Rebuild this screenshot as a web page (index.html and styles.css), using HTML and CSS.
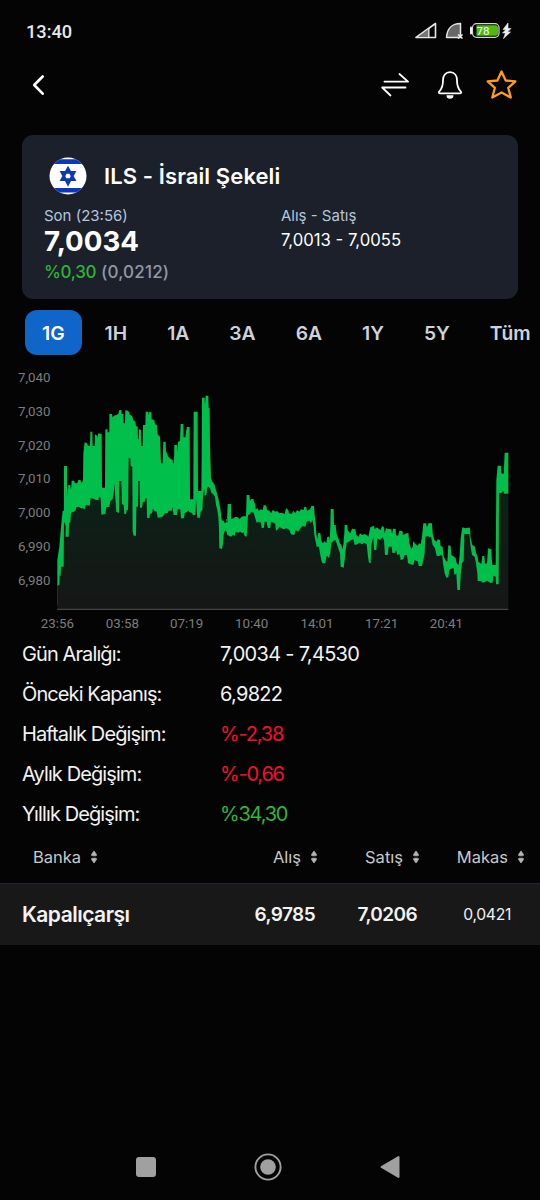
FILE: index.html
```
<!DOCTYPE html>
<html lang="tr">
<head>
  <meta charset="UTF-8">
  <meta name="viewport" content="width=device-width, initial-scale=1.0">
  <title>ILS - İsrail Şekeli</title>
  <link rel="stylesheet" href="styles.css">
</head>
<body>
  <div class="app">
    <div class="status-bar">
      <span class="clock">13:40</span>
      <svg class="status-icons" width="98" height="24" viewBox="0 0 98 24">
        <path d="M2 18.500L21.500 4.500V18.500z" fill="none" stroke="#e6e6e6" stroke-width="1.600" stroke-linejoin="round"/>
        <path d="M4 18L14.500 10V18z" fill="#777"/>
        <path d="M14.800 9V18.500" stroke="#e6e6e6" stroke-width="1.400"/>
        <path d="M32.500 18.500C33 10 38 4.500 46.500 4.500V18.500z" fill="#686868" stroke="#e6e6e6" stroke-width="1.500" stroke-linejoin="round"/>
        <path d="M44 15.500l4.500 4M48.500 15.500l-4.500 4" stroke="#eee" stroke-width="1.600"/>
        <rect x="58.500" y="4.700" width="26.500" height="13.600" rx="4" fill="#050505" stroke="#d5d5d5" stroke-width="1.200"/>
        <path d="M62.500 6.200H81.500a2.500 2.500 0 0 1 2.500 2.500v5.600a2.500 2.500 0 0 1-2.500 2.500H62.500z" fill="#4cbb12"/>
        <path d="M57 8.500v6" stroke="#eee" stroke-width="2" stroke-linecap="round"/>
        <text class="battery-text" x="69" y="15.700" text-anchor="middle">78</text>
        <path d="M94 4l-5 6.500h3l-3.500 3.500h3L89.500 19.500l7-6.500h-3l3.500-3.500h-3z" fill="#eee" stroke="#eee" stroke-width=".6"/>
      </svg>
    </div>

    <header class="app-header">
      <svg width="24" height="28" viewBox="0 0 24 28">
        <path d="M15.700 5.500L7.200 14L15.700 22.700" fill="none" stroke="#fff" stroke-width="2.600" stroke-linecap="round" stroke-linejoin="round"/>
      </svg>
      <div class="header-actions">
        <svg class="swap" width="30" height="28" viewBox="0 0 30 28" fill="none" stroke="#fff" stroke-width="1.800" stroke-linecap="round" stroke-linejoin="round">
          <path d="M3.500 10.700H27L18.500 3M24.500 16.500H1.200L9.500 24.500"/>
        </svg>
        <svg class="bell" width="28" height="30" viewBox="0 0 28 30">
          <path d="M13 2.200C8.400 2.200 6 5.700 6 10.200C6 17 4.600 19 2.300 21.300C1.300 22.600 1.700 23.300 2.900 23.300H23.100C24.300 23.300 24.700 22.600 23.700 21.300C21.400 19 20 17 20 10.200C20 5.700 17.600 2.200 13 2.200z" fill="none" stroke="#fff" stroke-width="1.800" stroke-linejoin="round"/>
          <path d="M9.500 25.300h7a3.500 3.500 0 0 1-7 0z" fill="#fff"/>
        </svg>
        <svg class="star" width="32" height="32" viewBox="0 0 32 32">
          <path d="M15.500 2.500L19.700 11.500L29.400 12.300L22.200 18.800L24.800 28.500L15.500 23.500L6.300 28.500L8.900 18.800L1.700 12.300L11.400 11.500z" fill="none" stroke="#ff9c1b" stroke-width="2.300" stroke-linejoin="round"/>
        </svg>
      </div>
    </header>

    <section class="card">
      <div class="card-title">
        <svg width="38" height="38" viewBox="0 0 38 38">
          <clipPath id="flagClip"><circle cx="19" cy="19" r="18.500"/></clipPath>
          <g clip-path="url(#flagClip)">
            <path d="M0 0H38V38H0z" fill="#fff"/>
            <path d="M0 2.200H38V7H0zM0 31H38V35.500H0z" fill="#0b38b8"/>
          </g>
          <path d="M19 11.500L25.200 22.600H12.800zM19 27L12.800 15.400H25.200z" fill="none" stroke="#0b38b8" stroke-width="2.600"/>
        </svg>
        <h1>ILS - İsrail Şekeli</h1>
      </div>
      <div class="card-body">
        <div class="last">
          <p class="label">Son (23:56)</p>
          <p class="price">7,0034</p>
          <p class="change"><span class="up">%0,30</span> (0,0212)</p>
        </div>
        <div class="bid-ask">
          <p class="label">Alış - Satış</p>
          <p class="value">7,0013 - 7,0055</p>
        </div>
      </div>
    </section>

    <nav class="tabs">
      <a class="active">1G</a>
      <a>1H</a>
      <a>1A</a>
      <a>3A</a>
      <a>6A</a>
      <a>1Y</a>
      <a>5Y</a>
      <a>Tüm</a>
    </nav>

    <svg class="chart" viewBox="0 0 1620 807">
      <defs>
        <linearGradient id="areaFill" gradientUnits="userSpaceOnUse" x1="0" y1="200" x2="0" y2="733">
          <stop offset="0" stop-color="#06301a"/>
          <stop offset=".4" stop-color="#0c2016"/>
          <stop offset="1" stop-color="#161616"/>
        </linearGradient>
      </defs>
      <!-- price range, highs down to the axis -->
      <path fill="#00bf4b" d="M172 640V585L178 545L183 487L188 437H192V303H201V358L203 395L205 360H211L213 375L215 347H222L225 355H232L235 345H241L245 355L249 345L250 265L254 232L261 235L264 242H270L271 200H277L278 243H284L285 208L291 212L292 218L295 205L305 207L306 368H315L316 193H322L323 202H328V147H336L337 157L343 152L355 147L358 135H364L365 147H370L371 175H375L376 135L383 137L387 140L390 150L396 152L400 165L406 170L408 183L413 185L414 223H416L417 193L423 195L424 243H428L429 180H436L437 140H445L446 150L448 140L454 142L455 163L463 165L465 177L471 180L473 208L480 215L483 295H488L490 230H497L498 258L505 275L512 282L518 285L519 295H522L523 240H531L532 262L534 230L540 228L542 177H550L551 217H556L558 200L561 185L569 187L570 403H580L581 140H593L594 378H604L605 270L606 98H614L615 120L617 92H625L626 128L629 130L630 240L633 340L637 350L643 358L648 375L655 400L661 430L665 465L672 468L674 475L681 470L683 418H690V463H673H677L682 473L684 417H693V463L700 460L707 455L714 457L718 463L725 455L734 453L738 455L740 390H748L750 407L754 402H760L763 413L766 417L767 433L773 430L776 437L783 433L788 435L791 420L799 422L801 435L808 437L813 445L818 435L826 440L832 438L838 445L846 443L854 448L858 430L865 435L867 445L875 447L880 437L886 445L891 435L898 440L903 433L911 435L913 425L919 427L921 437L927 435L932 430L934 422L942 423L944 450L947 475L949 505L952 523L955 503L961 505L964 527L968 535L974 529L979 535L982 515H987L989 525L991 485L992 432H1001L1002 480H1007L1010 507L1016 523L1019 533L1024 540L1027 553L1030 540L1033 505L1034 480H1041L1044 497L1051 505L1056 491L1066 493L1069 510L1076 515L1080 505L1087 510L1093 507L1100 510L1105 515L1111 487L1121 482L1124 492L1131 487L1137 493L1142 495L1146 483L1152 487L1154 505L1158 490L1165 492L1174 493L1176 507L1179 491L1187 492L1188 510L1194 513L1198 497L1207 498L1209 510L1215 507L1225 503L1228 535L1234 553L1238 545L1240 528L1246 537L1253 543L1257 535L1262 537L1266 515L1270 475H1278L1281 487L1286 474L1296 475L1298 505L1303 525L1310 530L1313 523L1320 525L1322 543L1328 547L1330 570L1336 585L1342 590L1345 541L1352 543L1354 570L1362 575L1367 580L1370 595L1376 600L1379 570L1382 520L1387 487L1396 490L1402 488H1410L1412 520L1417 540L1425 545L1428 563L1433 575L1435 590L1444 597L1447 573H1453L1455 597L1461 595L1464 550L1474 553L1475 575L1477 600H1487L1489 345L1493 302H1503L1504 325L1511 327L1514 263H1525V386H1510V720H172z"/>
      <!-- area below the lows -->
      <path fill="url(#areaFill)" d="M172 733V662L178 660L179 632H182L183 605H191L192 470L197 480V515H206L207 475L211 472L213 443L226 438L229 427L236 425L243 430H248L254 433L257 420L269 422L272 400L283 402L287 405H295L297 395L302 398L304 449L316 447L319 427L328 425L331 408L338 402L341 385L344 355L346 400L349 440L357 444L358 348H364L366 417L371 420L373 447H378L380 436L384 435L386 278L391 280L392 303L397 305L398 500L401 512H408L409 425H414L415 348H419L420 428H426L428 412L434 410L436 400H440L441 458L448 460L450 447L456 445L459 430L463 438L470 440L473 458L485 457L490 452L494 445L503 444L506 437H515L517 425L521 450H531L533 433H541L543 460H552L554 445L566 437L568 442L575 443L579 450H586L588 400L590 430L592 458H600L602 440L607 435L609 395L612 370L614 392L620 388L621 370L625 365L630 370L634 383L640 388L645 395L648 420L652 435L655 455L657 490L658 550L666 552L669 535L671 510L675 495L680 500L682 510L688 513L693 515L698 510L704 512L707 500L715 503L720 500L727 505L730 500L734 513L740 515L742 485L744 450L750 448L753 440L761 443L766 460L770 473L777 470L783 473L785 490L792 488L794 470H800L803 488L811 490L813 470L820 473L826 477L828 497L834 493L838 485L844 490L852 493L860 490L868 495L873 508L883 510L887 495L895 500L901 490L908 483L916 485L920 470L928 467L933 475L937 465L941 485L943 510L947 530L950 545H957L960 565L964 585L967 595H976L979 575L983 573L986 580L991 565L994 535L1000 527L1006 525L1010 535L1015 550L1020 565L1022 605L1031 608L1034 585L1037 555L1040 533L1047 530L1053 525L1060 523L1064 540L1072 538L1078 533L1086 538L1092 533L1100 537L1104 575L1107 593L1112 595L1114 540L1120 515L1122 555H1129L1132 520L1140 525L1148 517L1152 525L1155 570H1163L1166 545H1175L1177 563L1184 565L1188 555L1192 570L1199 567L1202 585L1210 583L1214 570H1221L1224 595L1232 598L1240 600L1244 585L1254 590L1256 603H1266L1269 590L1274 565L1276 515L1284 513L1288 517L1293 515L1298 540L1305 550L1310 573H1318L1322 570L1327 573L1329 595L1334 625L1339 638L1345 637L1348 615L1356 610H1361L1363 630L1369 625L1372 675H1380L1382 630L1386 595L1391 588L1393 507H1408L1412 545L1416 570L1424 575L1428 595L1432 625L1433 648H1443L1448 653L1455 651L1462 647L1470 653H1478L1480 632L1487 635L1488 658H1496L1497 383L1503 385L1510 377L1513 390L1521 391L1525 383V733z"/>
      <path d="M171 733H1525" stroke="#444" stroke-width="4"/>
      <g class="axis y-axis">
        <text x="54" y="51">7,040</text>
        <text x="54" y="152">7,030</text>
        <text x="54" y="254">7,020</text>
        <text x="54" y="355">7,010</text>
        <text x="54" y="457">7,000</text>
        <text x="54" y="558">6,990</text>
        <text x="54" y="660">6,980</text>
      </g>
      <g class="axis x-axis">
        <text x="172" y="790">23:56</text>
        <text x="367" y="790">03:58</text>
        <text x="560" y="790">07:19</text>
        <text x="755" y="790">10:40</text>
        <text x="951" y="790">14:01</text>
        <text x="1145" y="790">17:21</text>
        <text x="1339" y="790">20:41</text>
      </g>
    </svg>

    <dl class="details">
      <dt>Gün Aralığı:</dt><dd>7,0034 - 7,4530</dd>
      <dt>Önceki Kapanış:</dt><dd>6,9822</dd>
      <dt>Haftalık Değişim:</dt><dd class="down">%-2,38</dd>
      <dt>Aylık Değişim:</dt><dd class="down">%-0,66</dd>
      <dt>Yıllık Değişim:</dt><dd class="up">%34,30</dd>
    </dl>

    <svg width="0" height="0" class="sprite">
      <symbol id="sort" viewBox="0 0 8 14">
        <path d="M4 .9L6.500 4.500Q6.800 5.800 5.500 5.800H2.500Q1.200 5.800 1.500 4.500zM4 13.100L6.500 9.500Q6.800 8.200 5.500 8.200H2.500Q1.200 8.200 1.500 9.500z" fill="#b5b5b5" stroke="#b5b5b5" stroke-width=".7" stroke-linejoin="round"/>
      </symbol>
    </svg>
    <div class="bank-row bank-head">
      <span class="bank">Banka <svg width="8" height="14"><use href="#sort"/></svg></span>
      <span>Alış <svg width="8" height="14"><use href="#sort"/></svg></span>
      <span>Satış <svg width="8" height="14"><use href="#sort"/></svg></span>
      <span>Makas <svg width="8" height="14"><use href="#sort"/></svg></span>
    </div>
    <div class="bank-row bank-item">
      <span class="bank">Kapalıçarşı</span>
      <span class="num">6,9785</span>
      <span class="num">7,0206</span>
      <span class="spread">0,0421</span>
    </div>

    <footer class="system-nav">
      <svg width="28" height="28" viewBox="0 0 28 28"><rect x="4" y="4" width="20" height="20" rx="3" fill="#a0a0a0"/></svg>
      <svg width="28" height="28" viewBox="0 0 28 28"><circle cx="14" cy="14" r="12.600" fill="none" stroke="#a0a0a0" stroke-width="1.900"/><circle cx="14" cy="14" r="7.800" fill="#a0a0a0"/></svg>
      <svg width="28" height="28" viewBox="0 0 28 28"><path d="M5.500 14L22.500 4V24z" fill="#a0a0a0" stroke="#a0a0a0" stroke-width="2" stroke-linejoin="round"/></svg>
    </footer>
  </div>
</body>
</html>
```
FILE: styles.css
```
* {
  margin: 0;
  padding: 0;
  box-sizing: border-box;
}

body {
  font-family: Inter, sans-serif;
  background-color: #040404;
  color: #f2f2f2;
}

.app {
  display: flex;
  flex-direction: column;
  width: 540px;
  height: 1200px;
  overflow: hidden;
}

svg {
  display: block;
  flex: none;
}

.sprite {
  display: none;
}

.status-bar {
  display: flex;
  align-items: center;
  justify-content: space-between;
  height: 60px;
  padding: 2px 28px 0 26px;
}

.clock {
  font: 500 18.2px Roboto, sans-serif;
  color: #e8e8e8;
}

.battery-text {
  font: 400 11.5px Roboto, sans-serif;
  fill: #fff;
}

.app-header {
  display: flex;
  align-items: center;
  justify-content: space-between;
  height: 50px;
  padding: 0 22px 0 27px;
}

.header-actions {
  display: flex;
  align-items: center;
}

.bell {
  margin: 0 21px 0 26px;
}

.card {
  height: 164px;
  margin: 25px 22px 0;
  padding: 22px 22px 0;
  border-radius: 11px;
  background-color: #1b202b;
}

.card-title {
  display: flex;
  align-items: center;
  gap: 17px;
  height: 38px;
  padding-left: 5px;
}

.card-title h1 {
  font-size: 22px;
  font-weight: 600;
  letter-spacing: 0.1px;
  color: #fff;
}

.card-body {
  display: flex;
  padding-top: 11px;
}

.last {
  width: 237px;
}

.label {
  font-size: 15px;
  line-height: 19px;
  color: #b5c6dc;
}

.price {
  font-size: 27.7px;
  font-weight: 700;
  line-height: 32px;
  color: #fff;
}

.change {
  font-size: 17px;
  font-weight: 500;
  letter-spacing: 0.2px;
  line-height: 31px;
  color: #9298a6;
}

.change .up {
  letter-spacing: -0.3px;
}

.value {
  font-size: 16.7px;
  line-height: 30px;
  color: #fff;
}

.up {
  color: #2fb536;
}

.down {
  color: #f50f2d;
}

.tabs {
  display: flex;
  gap: 6px;
  height: 45px;
  margin: 11px 0 0 25px;
}

.tabs a {
  flex: none;
  padding: 0 17px;
  border-radius: 12px;
  font-size: 19.3px;
  font-weight: 600;
  line-height: 47px;
  color: #ced2d9;
}

.tabs .active {
  background-color: #1065c8;
  color: #fff;
}

.chart {
  width: 540px;
  height: 269px;
  margin-top: 10px;
}

.axis {
  font: 400 40px Roboto, sans-serif;
  fill: #7d7d7d;
}

.x-axis {
  text-anchor: middle;
}

.details {
  display: grid;
  grid-template-columns: 198px 1fr;
  padding-left: 22px;
  font-size: 20px;
  line-height: 40px;
}

.details dt {
  letter-spacing: -0.9px;
}

.details dd {
  letter-spacing: -0.7px;
}

.details .up,
.details .down {
  letter-spacing: -1.2px;
}

.bank-row {
  display: grid;
  grid-template-columns: 218px 100px 102px 105px;
  align-items: center;
  text-align: right;
}

.bank-row .bank {
  text-align: left;
}

.bank-head {
  height: 49px;
  padding-bottom: 4px;
  font-size: 16.5px;
  color: #c8c8c8;
}

.bank-head span {
  display: flex;
  align-items: center;
  justify-content: flex-end;
  gap: 9px;
}

.bank-head .bank {
  justify-content: flex-start;
  padding-left: 33px;
}

.bank-item {
  height: 62px;
  border-top: 1px solid #26252f;
  background-color: #181818;
}

.bank-item .bank {
  padding-left: 22px;
  font-size: 21px;
  font-weight: 600;
  letter-spacing: -0.5px;
}

.num {
  padding-right: 3px;
  font-size: 19px;
  font-weight: 600;
  letter-spacing: -0.6px;
}

.spread {
  padding-right: 14px;
  font-size: 15.7px;
  letter-spacing: -0.3px;
}

.system-nav {
  display: flex;
  justify-content: center;
  gap: 94px;
  margin-top: auto;
  padding: 0 4px 19px 0;
}
```
